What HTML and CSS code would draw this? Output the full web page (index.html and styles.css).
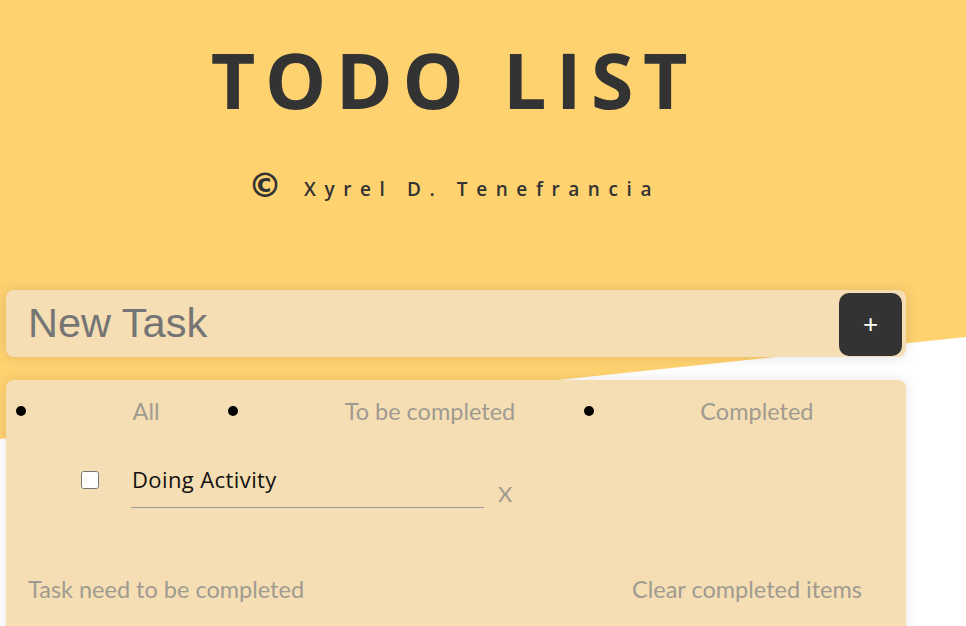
FILE: index.html
```html
<!DOCTYPE html>
<html lang="en">
<head>
<meta charset="utf-8">
<title>Todo List</title>
<link rel="stylesheet" href="styles.css">
</head>
<body>
<div class="bg"></div>
<div class="wrap">
  <header class="head">
    <h1 class="title">TODO LIST</h1>
    <p class="author"><span class="copy">©</span><span class="name">Xyrel D. Tenefrancia</span></p>
  </header>
  <form class="new-task">
    <input class="new-input" type="text" placeholder="New Task">
    <button class="add-btn" type="button">+</button>
  </form>
  <section class="card">
    <ul class="filters">
      <li class="filter">All</li>
      <li class="filter">To be completed</li>
      <li class="filter">Completed</li>
    </ul>
    <div class="item">
      <input class="check" type="checkbox">
      <input class="item-text" type="text" value="Doing Activity">
      <span class="remove">X</span>
    </div>
    <div class="card-foot">
      <span class="foot-text">Task need to be completed</span>
      <span class="foot-text">Clear completed items</span>
    </div>
  </section>
</div>
</body>
</html>
```
FILE: styles.css
```css
html, body {
  margin: 0;
  padding: 0;
}
body {
  position: relative;
  width: 966px;
  height: 626px;
  overflow: hidden;
  background: #ffffff;
  font-family: Lato, "Open Sans", sans-serif;
}
.bg {
  position: absolute;
  top: 0;
  left: 0;
  width: 100%;
  height: 626px;
  background: #ffd270;
  clip-path: polygon(0 0, 100% 0, 100% 337px, 0 439px);
  z-index: 0;
}
.wrap {
  position: relative;
  z-index: 1;
  width: 900px;
  margin-left: 6px;
  padding-top: 41px;
}
.head {
  text-align: center;
  color: #333333;
}
.title {
  margin: 0;
  font-family: "Open Sans", sans-serif;
  font-weight: 700;
  font-size: 77px;
  line-height: 77px;
  letter-spacing: 9.6px;
  padding-right: 4px;
}
.author {
  margin: 47px 0 0 0;
  display: flex;
  justify-content: center;
  align-items: center;
  gap: 22px;
  height: 40px;
  padding-right: 4px;
}
.copy {
  font-family: "DejaVu Sans", sans-serif;
  font-weight: 700;
  font-size: 34px;
  line-height: 40px;
}
.name {
  font-family: "Open Sans", sans-serif;
  font-weight: 600;
  font-size: 19px;
  letter-spacing: 8.6px;
  line-height: 40px;
  padding-top: 8px;
}
.new-task {
  margin-top: 85px;
  display: flex;
  align-items: stretch;
  height: 67px;
  box-sizing: border-box;
  padding: 3px 4px 1px 22px;
  background: #f5deb3;
  border-radius: 8px;
  box-shadow: 0 0 14px rgba(0, 0, 0, 0.12);
}
.new-input {
  flex: 1;
  min-width: 0;
  border: none;
  outline: none;
  background: transparent;
  font-family: "Liberation Sans", Arial, sans-serif;
  font-size: 41.5px;
  color: #333;
  padding: 0 0 3px 0;
}
.new-input::placeholder {
  color: #757575;
}
.add-btn {
  width: 63px;
  height: 63px;
  border: none;
  border-radius: 10px;
  background: #333333;
  color: #ffffff;
  font-family: "Liberation Sans", Arial, sans-serif;
  font-size: 26px;
  line-height: 1;
  padding: 0 0 2px 0;
}
.card {
  margin-top: 23px;
  height: 280px;
  background: #f5deb3;
  border-radius: 8px;
  box-shadow: 0 0 14px rgba(0, 0, 0, 0.1);
}
.filters {
  list-style: none;
  margin: 0;
  padding: 16px 0 0 34px;
  display: flex;
}
.filter {
  position: relative;
  flex: 1 1 auto;
  text-align: center;
  font-size: 23.5px;
  line-height: 30px;
  color: #a09b91;
}
.filter::before {
  content: "";
  position: absolute;
  left: -24px;
  top: 10px;
  width: 10px;
  height: 10px;
  border-radius: 50%;
  background: #000000;
}
.item {
  display: flex;
  align-items: flex-start;
  margin-top: 36px;
  padding-left: 75px;
}
.check {
  width: 18px;
  height: 18px;
  margin: 9px 32px 0 0;
}
.item-text {
  width: 353px;
  height: 46px;
  box-sizing: border-box;
  border: none;
  border-bottom: 1px solid #999999;
  background: transparent;
  outline: none;
  font-family: "Open Sans", sans-serif;
  font-size: 22px;
  letter-spacing: 0.4px;
  color: #111111;
  padding: 0 0 12px 1px;
}
.remove {
  margin-left: 14px;
  margin-top: 19px;
  font-size: 22px;
  line-height: 26px;
  color: #a09b91;
}
.card-foot {
  display: flex;
  justify-content: space-between;
  margin-top: 66px;
  padding: 0 44px 0 22px;
}
.foot-text {
  font-size: 23.5px;
  line-height: 30px;
  color: #a09b91;
}
```
